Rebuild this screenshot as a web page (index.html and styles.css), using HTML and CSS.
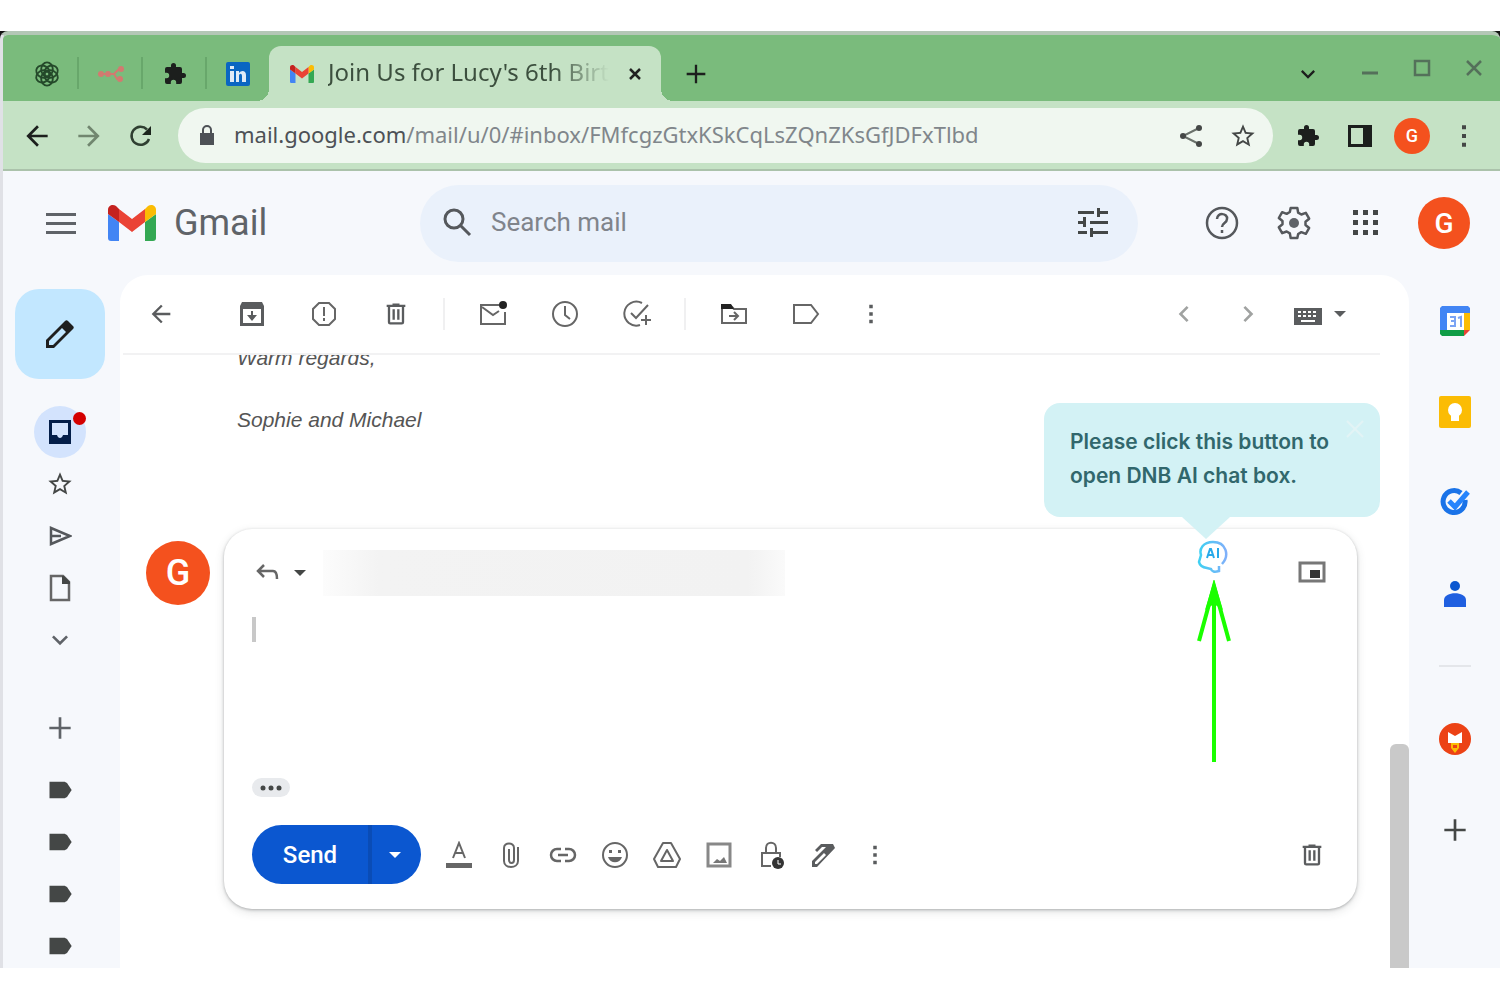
FILE: index.html
```html
<!DOCTYPE html>
<html lang="en">
<head>
    <meta charset="UTF-8">
    <meta name="viewport" content="width=device-width, initial-scale=1.0">
    <title>Gmail</title>
    <link rel="stylesheet" href="styles.css">
</head>
<body>
    <!-- shared icons -->
    <svg class="sprite" aria-hidden="true">
        <symbol id="gmail" viewBox="0 0 48 36">
            <path fill="#4285f4" d="M3 36h8V17L0 9v24c0 2 1 3 3 3z"/>
            <path fill="#34a853" d="M37 36h8c2 0 3-1 3-3V9l-11 8z"/>
            <path fill="#fbbc04" d="M37 4v13l11-8V5c0-5-5-6-8-4z"/>
            <path fill="#ea4335" d="M11 17V4l13 10L37 4v13L24 27z"/>
            <path fill="#c5221f" d="M0 5v4l11 8V4L8 1C5-1 0 0 0 5z"/>
        </symbol>
        <symbol id="puzzle" viewBox="0 0 24 24">
            <path d="M20.500 11H19V7a2 2 0 0 0-2-2h-4V3.500a2.500 2.500 0 0 0-5 0V5H4a2 2 0 0 0-2 2v3.800h1.500a2.700 2.700 0 0 1 0 5.400H2V20a2 2 0 0 0 2 2h3.800v-1.500a2.700 2.700 0 0 1 5.400 0V22H17a2 2 0 0 0 2-2v-4h1.500a2.500 2.500 0 0 0 0-5z"/>
        </symbol>
        <symbol id="star" viewBox="0 0 24 24">
            <path d="M22 9.240l-7.190-.620L12 2 9.190 8.630 2 9.240l5.460 4.730L5.820 21 12 17.270 18.180 21l-1.630-7.030L22 9.240zM12 15.400l-3.760 2.270 1-4.280-3.320-2.880 4.380-.380L12 6.100l1.710 4.040 4.380.380-3.320 2.880 1 4.280L12 15.400z"/>
        </symbol>
        <symbol id="back" viewBox="0 0 24 24">
            <path d="M20 11H7.830l5.590-5.590L12 4l-8 8 8 8 1.410-1.410L7.830 13H20v-2z"/>
        </symbol>
        <symbol id="caret" viewBox="0 0 24 24"><path d="M6 9l6 6 6-6z"/></symbol>
        <symbol id="chevron" viewBox="0 0 24 24"><path d="M7.400 8.600L12 13.200l4.600-4.600L18 10l-6 6-6-6z"/></symbol>
        <symbol id="more" viewBox="0 0 24 24">
            <path d="M10.500 4h3v3h-3zM10.500 10.500h3v3h-3zM10.500 17h3v3h-3z"/>
        </symbol>
        <symbol id="trash" viewBox="0 0 24 24">
            <path d="M15 4V3H9v1H4v2h1v13a2 2 0 0 0 2 2h10a2 2 0 0 0 2-2V6h1V4h-5zm2 15H7V6h10v13zM9 8h2v9H9zm4 0h2v9h-2z"/>
        </symbol>
        <symbol id="label" viewBox="0 0 24 24">
            <path d="M3 5h13l2 1 4 6-4 6-2 1H3z"/>
        </symbol>
        <symbol id="plus" viewBox="0 0 24 24"><path d="M11 4h2v7h7v2h-7v7h-2v-7H4v-2h7z"/></symbol>
    </svg>

    <div class="desktop">
    <div class="window">
        <div class="tabstrip">
            <div class="pinned">
                <svg class="i28 line" viewBox="0 0 24 24"><g stroke="#24492a" stroke-width="1.600"><ellipse cx="12" cy="8" rx="5" ry="6"/><ellipse cx="12" cy="8" rx="5" ry="6" transform="rotate(60 12 12)"/><ellipse cx="12" cy="8" rx="5" ry="6" transform="rotate(120 12 12)"/><ellipse cx="12" cy="8" rx="5" ry="6" transform="rotate(180 12 12)"/><ellipse cx="12" cy="8" rx="5" ry="6" transform="rotate(240 12 12)"/><ellipse cx="12" cy="8" rx="5" ry="6" transform="rotate(300 12 12)"/></g></svg>
            </div>
            <div class="pinned">
                <svg class="i28 line" viewBox="0 0 28 28"><path stroke="#d27a70" stroke-width="2" d="M1 14h16l5-5M17 14l3 5h3"/><g fill="#d27a70"><circle cx="4" cy="14" r="3"/><circle cx="11" cy="14" r="3"/><circle cx="24" cy="9" r="3"/><circle cx="23" cy="19" r="3"/></g></svg>
            </div>
            <div class="pinned"><svg class="i24 ink"><use href="#puzzle"/></svg></div>
            <div class="pinned">
                <svg class="i24" viewBox="0 0 24 24"><rect width="24" height="24" rx="2" fill="#0a66c2"/><path fill="#dfeaf7" d="M4 9h4v11H4zM4 4h4v3H4zM10 9h3v2c2-3 7-3 7 2v7h-4v-6c0-3-3-3-3 0v6h-3z"/></svg>
            </div>
            <div class="tab">
                <svg class="tab-icon"><use href="#gmail"/></svg>
                <span class="tab-title">Join Us for Lucy's 6th Birt</span>
                <button class="icon-btn tab-close" aria-label="Close tab"><svg class="i20 line" viewBox="0 0 20 20"><path stroke="#222" stroke-width="2.500" d="M5 5l10 10M15 5L5 15"/></svg></button>
            </div>
            <button class="icon-btn new-tab" aria-label="New tab"><svg class="i28 ink"><use href="#plus"/></svg></button>
            <div class="window-buttons">
                <button class="icon-btn chrome search-tabs" aria-label="Search tabs"><svg class="i28 ink"><use href="#chevron"/></svg></button>
                <button class="icon-btn chrome" aria-label="Minimize"><svg class="i20 line" viewBox="0 0 20 20"><path stroke="#54705a" stroke-width="3" d="M2 15h16"/></svg></button>
                <button class="icon-btn chrome" aria-label="Maximize"><svg class="i20 line" viewBox="0 0 20 20"><path stroke="#54705a" stroke-width="2.500" d="M3 3h14v14H3z"/></svg></button>
                <button class="icon-btn chrome" aria-label="Close"><svg class="i20 line" viewBox="0 0 20 20"><path stroke="#54705a" stroke-width="2.500" d="M3 3l14 14M17 3L3 17"/></svg></button>
            </div>
        </div>

        <div class="toolbar">
            <button class="icon-btn chrome" aria-label="Back"><svg class="i32 ink"><use href="#back"/></svg></button>
            <button class="icon-btn chrome" aria-label="Forward"><svg class="i32 faded flip"><use href="#back"/></svg></button>
            <button class="icon-btn chrome" aria-label="Reload"><svg class="i24 line" viewBox="0 0 24 24"><path stroke="#2f3f31" stroke-width="2.500" d="M20 15a9 9 0 1 1-2-9.500"/><path fill="#1c251d" d="M22 2v9h-9z"/></svg></button>
            <div class="omnibox">
                <svg class="lock" viewBox="0 0 16 22"><path fill="#4d5156" d="M1 8h14v12H1z"/><path fill="none" stroke="#4d5156" stroke-width="2" d="M4 8V5a4 4 0 0 1 8 0v3"/></svg>
                <div class="url"><b>mail.google.com</b>/mail/u/0/#inbox/FMfcgzGtxKSkCqLsZQnZKsGfJDFxTlbd</div>
                <button class="icon-btn chrome" aria-label="Share"><svg class="i24" viewBox="0 0 24 24"><path fill="none" stroke="#6a716b" stroke-width="2" d="M20 4L4 12l16 8"/><circle cx="20" cy="4" r="3"/><circle cx="4" cy="12" r="3"/><circle cx="20" cy="20" r="3"/></svg></button>
                <button class="icon-btn chrome" aria-label="Bookmark"><svg class="i28"><use href="#star"/></svg></button>
            </div>
            <button class="icon-btn chrome" aria-label="Extensions"><svg class="i24 ink"><use href="#puzzle"/></svg></button>
            <button class="icon-btn chrome" aria-label="Side panel"><svg class="i24 ink" viewBox="0 0 24 24"><path d="M0 1h24v22H0zM3 4v16h12V4z"/></svg></button>
            <button class="icon-btn chrome" aria-label="Profile"><span class="avatar avatar-s">G</span></button>
            <button class="icon-btn chrome" aria-label="Menu"><svg class="i32"><use href="#more"/></svg></button>
        </div>

        <header class="header">
            <button class="icon-btn menu" aria-label="Main menu"><svg class="i32 soft" viewBox="0 0 32 24"><path d="M1 2h30v3H1zM1 11h30v3H1zM1 20h30v3H1z"/></svg></button>
            <a class="brand" href="#"><svg class="brand-logo"><use href="#gmail"/></svg>Gmail</a>
            <div class="search">
                <svg class="i32 line" viewBox="0 0 32 32"><circle cx="13" cy="13" r="9" stroke="#55585c" stroke-width="3"/><path stroke="#55585c" stroke-width="3" d="M19 19l10 10"/></svg>
                <input type="text" placeholder="Search mail" aria-label="Search mail">
                <button class="icon-btn" aria-label="Search options"><svg class="i32" viewBox="0 0 32 32"><path d="M1 5h16v3H1zM20 2h3v3h8v3h-8v3h-3zM1 15h5v-4h3v10H6v-3H1zM13 15h18v3H13zM1 25h9v3H1zM13 22h3v3h15v3H16v3h-3z"/></svg></button>
            </div>
            <button class="icon-btn tool" aria-label="Support"><svg class="i36 line" viewBox="0 0 36 36"><g stroke="#55585c" stroke-width="2.500"><circle cx="18" cy="18" r="15"/><path d="M13 14c0-7 11-6 10 0 0 4-5 4-5 8M18 25v3"/></g></svg></button>
            <button class="icon-btn tool" aria-label="Settings"><svg class="i40 soft" viewBox="0 0 24 24"><path fill="none" stroke="#55585c" stroke-width="1.500" stroke-linejoin="round" d="M10 3h4l.5 2.800 1.900 1.100 2.700-1 2 3.500-2.200 1.800v2l2.200 1.800-2 3.500-2.700-1-1.900 1.100L14 21h-4l-.5-2.800-1.900-1.100-2.700 1-2-3.500 2.200-1.800v-2L2.900 9l2-3.500 2.700 1 1.900-1.100z"/><circle cx="12" cy="12" r="3"/></svg></button>
            <button class="icon-btn tool" aria-label="Google apps"><svg class="i28" viewBox="0 0 28 28"><path d="M1 1h5v5H1zM11 1h5v5h-5zM21 1h5v5h-5zM1 11h5v5H1zM11 11h5v5h-5zM21 11h5v5h-5zM1 21h5v5H1zM11 21h5v5h-5zM21 21h5v5h-5z"/></svg></button>
            <button class="icon-btn account" aria-label="Account"><span class="avatar avatar-m">G</span></button>
        </header>

        <div class="body">
            <nav class="rail">
                <button class="icon-btn compose" aria-label="Compose"><svg class="i36" viewBox="0 0 36 36"><path fill="#1f1f1f" d="M4 32v-8L23 5c1-1 2-1 3 0l5 5c1 1 1 2 0 3L12 32zM7 29h4l13-13-4-4L7 25z" fill-rule="evenodd"/></svg></button>
                <a class="rail-item" href="#" aria-label="Inbox"><span class="inbox"><svg class="i24" viewBox="0 0 24 24"><path fill="#041e49" fill-rule="evenodd" d="M1 0h22v24H1zM4 3v12h5c1 4 5 4 6 0h5V3z"/></svg><span class="dot"></span></span></a>
                <a class="rail-item" href="#" aria-label="Starred"><svg class="i28"><use href="#star"/></svg></a>
                <a class="rail-item" href="#" aria-label="Sent"><svg class="i24 line" viewBox="0 0 24 24"><path stroke="#55585c" stroke-width="2.500" d="M3 4l19 8-19 8zM3 12h10"/></svg></a>
                <a class="rail-item" href="#" aria-label="Drafts"><svg class="i28 line" viewBox="0 0 28 28"><path stroke="#666" stroke-width="2.500" d="M5 2h12l6 6v18H5z"/><path fill="#444746" d="M16 2h2l6 6v2h-8z"/></svg></a>
                <a class="rail-item" href="#" aria-label="More"><svg class="i32 soft"><use href="#chevron"/></svg></a>
                <a class="rail-item create" href="#" aria-label="Create label"><svg class="i32 soft"><use href="#plus"/></svg></a>
                <a class="rail-item" href="#" aria-label="Label 1"><svg class="i28"><use href="#label"/></svg></a>
                <a class="rail-item" href="#" aria-label="Label 2"><svg class="i28"><use href="#label"/></svg></a>
                <a class="rail-item" href="#" aria-label="Label 3"><svg class="i28"><use href="#label"/></svg></a>
                <a class="rail-item" href="#" aria-label="Label 4"><svg class="i28"><use href="#label"/></svg></a>
            </nav>

            <main class="panel">
                <div class="actions">
                    <button class="icon-btn tool first" aria-label="Back to inbox"><svg class="i28"><use href="#back"/></svg></button>
                    <button class="icon-btn tool" aria-label="Archive"><svg class="i28" viewBox="0 0 28 28"><path fill-rule="evenodd" d="M4 2h20l2 4v20H2V6zM5 9v14h18V9zM13 11h2v4h4l-5 6-5-6h4z"/></svg></button>
                    <button class="icon-btn tool" aria-label="Report spam"><svg class="i28 line" viewBox="0 0 28 28"><path stroke="#666" stroke-width="2" d="M9 3h10l6 6v10l-6 6H9l-6-6V9zM14 7v9M14 18v3"/></svg></button>
                    <button class="icon-btn tool" aria-label="Delete"><svg class="i28"><use href="#trash"/></svg></button>
                    <span class="divider"></span>
                    <button class="icon-btn tool" aria-label="Mark as unread"><svg class="i28 line" viewBox="0 0 28 28"><path stroke="#666" stroke-width="2" d="M20 5H2v19h24V12M3 7l11 8 6-4"/><circle cx="24" cy="5" r="4" fill="#222"/></svg></button>
                    <button class="icon-btn tool" aria-label="Snooze"><svg class="i28 line" viewBox="0 0 28 28"><g stroke="#666" stroke-width="2"><circle cx="14" cy="14" r="12"/><path d="M14 6v9l5 4"/></g></svg></button>
                    <button class="icon-btn tool" aria-label="Add to tasks"><svg class="i28 line" viewBox="0 0 28 28"><path stroke="#666" stroke-width="2" d="M19 3A12 12 0 1 0 17 25M8 13l5 5L25 5M23 15v10M18 20h10"/></svg></button>
                    <span class="divider"></span>
                    <button class="icon-btn tool" aria-label="Move to"><svg class="i28 line" viewBox="0 0 28 28"><path stroke="#666" stroke-width="2" d="M2 6h9l3 3h12v14H2zM9 16h9M14 12l4 4-4 4"/><path fill="#222" d="M1 4h10l3 5H1z"/></svg></button>
                    <button class="icon-btn tool" aria-label="Labels"><svg class="i28 line" viewBox="0 0 28 28"><path stroke="#666" stroke-width="2" d="M2 5h17l7 9-7 9H2z"/></svg></button>
                    <button class="icon-btn tool narrow" aria-label="More"><svg class="i28"><use href="#more"/></svg></button>
                    <span class="spacer"></span>
                    <button class="icon-btn pager" aria-label="Newer"><svg class="i32 pale left"><use href="#chevron"/></svg></button>
                    <button class="icon-btn pager" aria-label="Older"><svg class="i32 pale right"><use href="#chevron"/></svg></button>
                    <button class="icon-btn keyboard" aria-label="Input tools"><svg class="i28" viewBox="0 0 28 28"><path fill-rule="evenodd" d="M0 8h28v17H0zM4 11v2h3v-2zm5 0v2h3v-2zm5 0v2h3v-2zm5 0v2h3v-2zM4 15v2h3v-2zm5 0v2h3v-2zm5 0v2h3v-2zm5 0v2h3v-2zM7 20v2h14v-2z"/></svg><svg class="i24"><use href="#caret"/></svg></button>
                </div>

                <div class="scroll">
                    <div class="thread">
                        <div class="message">
                            <p>Warm regards,</p>
                            <p>Sophie and Michael</p>
                        </div>
                        <div class="reply">
                            <span class="avatar avatar-l">G</span>
                            <div class="card">
                                <div class="recipient">
                                    <button class="icon-btn" aria-label="Type of response"><svg class="i28 line" viewBox="0 0 28 28"><path stroke="#666" stroke-width="2.500" d="M12 6l-6 6 6 6M6 12h15q4 0 4 8"/></svg><svg class="i24"><use href="#caret"/></svg></button>
                                    <span class="redacted"></span>
                                    <button class="icon-btn pop-out" aria-label="Pop out reply"><svg class="i28 line" viewBox="0 0 28 28"><path stroke="#777" stroke-width="3" d="M2 4h24v18H2z"/><path fill="#333" d="M12 11h10v8H12z"/></svg></button>
                                </div>
                                <div class="editor">
                                    <span class="cursor"></span>
                                    <textarea aria-label="Message body"></textarea>
                                </div>
                                <button class="icon-btn trimmed" aria-label="Show trimmed content"><svg viewBox="0 0 24 6"><circle cx="4" cy="3" r="2.500"/><circle cx="12" cy="3" r="2.500"/><circle cx="20" cy="3" r="2.500"/></svg></button>
                                <div class="format">
                                    <div class="send-group">
                                        <button class="send">Send</button>
                                        <button class="send-more" aria-label="More send options"><svg class="i24"><use href="#caret"/></svg></button>
                                    </div>
                                    <button class="icon-btn fmt" aria-label="Formatting options"><svg class="i28 line" viewBox="0 0 28 28"><path stroke="#666" stroke-width="2" d="M8 17l6-15 6 15M10 12h8"/><path fill="#666" d="M1 22h26v5H1z"/></svg></button>
                                    <button class="icon-btn fmt" aria-label="Attach files"><svg class="i28 line" viewBox="0 0 28 28"><path stroke="#666" stroke-width="2" d="M21 6v14c0 8-14 8-14 0V7c0-6 10-6 10 0v12c0 4-5 4-5 0V8"/></svg></button>
                                    <button class="icon-btn fmt" aria-label="Insert link"><svg class="i28 line" viewBox="0 0 28 28"><path stroke="#666" stroke-width="2.500" d="M12 8H8a6 6 0 0 0 0 12h4M16 8h4a6 6 0 0 1 0 12h-4M9 14h10"/></svg></button>
                                    <button class="icon-btn fmt" aria-label="Insert emoji"><svg class="i28 line" viewBox="0 0 28 28"><circle cx="14" cy="14" r="12" stroke="#666" stroke-width="2"/><path fill="#666" d="M8 9h3v3H8zM17 9h3v3h-3zM7 16h14c-2 7-12 7-14 0z"/></svg></button>
                                    <button class="icon-btn fmt" aria-label="Insert from Drive"><svg class="i28 line" viewBox="0 0 28 28"><g stroke="#666" stroke-width="2" stroke-linejoin="round"><path d="M10 2h8l9 16-4 8H5l-4-8z"/><path d="M14 9l6 11H8z"/></g></svg></button>
                                    <button class="icon-btn fmt" aria-label="Insert photo"><svg class="i28 line" viewBox="0 0 28 28"><path stroke="#888" stroke-width="3" d="M3 3h22v22H3z"/><path fill="#777" d="M8 22l4-4 3 2 4-4 3 6z"/></svg></button>
                                    <button class="icon-btn fmt" aria-label="Confidential mode"><svg class="i28 line" viewBox="0 0 28 28"><path stroke="#666" stroke-width="2" d="M14 25H5V12h18v4M9 12V7c0-7 10-7 10 0v5"/><circle cx="21" cy="22" r="6" fill="#333"/><path stroke="#fff" d="M21 19v4h3"/></svg></button>
                                    <button class="icon-btn fmt" aria-label="Insert signature"><svg class="i28" viewBox="0 0 28 28"><path d="M3 26v-6L17 6h-4l-5 5-2-2 6-6h12l2 4L8 26zM6 21v2h2l9-9-2-2z" fill-rule="evenodd"/></svg></button>
                                    <button class="icon-btn fmt" aria-label="More options"><svg class="i28"><use href="#more"/></svg></button>
                                    <span class="spacer"></span>
                                    <button class="icon-btn discard" aria-label="Discard draft"><svg class="i28"><use href="#trash"/></svg></button>
                                </div>

                                <!-- AI helper button and its hint -->
                                <div class="hint">
                                    <p>Please click this button to open DNB AI chat box.</p>
                                    <button class="icon-btn hint-close" aria-label="Close hint"><svg class="i20 line" viewBox="0 0 20 20"><path stroke="#e2f4f5" stroke-width="2" d="M2 2l16 16M18 2L2 18"/></svg></button>
                                </div>
                                <button class="icon-btn ai" aria-label="Open AI chat"><svg viewBox="0 0 32 34"><defs><linearGradient id="ai-stroke"><stop offset="0" stop-color="#3fd0f2"/><stop offset="1" stop-color="#7fb0fa"/></linearGradient></defs><path fill="none" stroke="url(#ai-stroke)" stroke-width="2.500" d="M25 24c8-9 4-22-9-22C6 2 2 9 4 15l-2 7q1 5 8 6l4 1q1 4 8 2v-5"/><path fill="none" stroke="#27a9ea" stroke-width="2" d="M10 18l3-9h1l3 9M11 15h5M21 8v10"/></svg></button>
                                <svg class="pointer" viewBox="0 0 36 182"><path fill="none" stroke="#1aff00" stroke-width="4" d="M18 6v176M3 61L18 6l15 55"/><path fill="#1aff00" d="M18 0l9 30-9-6-9 6z"/></svg>
                            </div>
                        </div>
                    </div>
                    <div class="scrollbar"><div class="thumb"></div></div>
                </div>
            </main>

            <aside class="addons">
                <a href="#" aria-label="Calendar"><svg class="i32" viewBox="0 0 32 32"><path fill="#fff" d="M6 6h20v20H6z"/><path fill="#4285f4" d="M1 3l2-2h26l2 2v5H8v18H1z"/><path fill="#fbbc04" d="M25 8h6v17h-6z"/><path fill="#0f9d46" d="M1 25h24v6H3l-2-2z"/><path fill="#ea4335" d="M25 25h6l-6 6z"/><path fill="none" stroke="#7ba4f4" stroke-width="2" d="M11 12h5v9h-5M12 16h4M19 13l3-1v10"/></svg></a>
                <a href="#" aria-label="Keep"><svg class="i32" viewBox="0 0 32 32"><rect width="32" height="32" rx="2" fill="#fbbc04"/><circle cx="16" cy="14" r="7" fill="#fff"/><path fill="#fff" d="M12 19h8v6h-8z"/></svg></a>
                <a href="#" aria-label="Tasks"><svg class="i32" viewBox="0 0 32 32"><path fill="none" stroke="#1a73e8" stroke-width="5" d="M22 6A11 11 0 1 0 26 13"/><path fill="none" stroke="#2684fc" stroke-width="5" d="M10 14l6 6L29 5"/></svg></a>
                <a href="#" aria-label="Contacts"><svg class="i28" viewBox="0 0 28 28"><circle cx="14" cy="6" r="5" fill="#0b57d0"/><path fill="#1f5fe0" d="M3 20c0-9 22-9 22 0v7H3z"/></svg></a>
                <span class="rule"></span>
                <a href="#" aria-label="Mail add-on"><svg class="i32" viewBox="0 0 32 32"><circle cx="16" cy="16" r="16" fill="#ec4215"/><path fill="#fff" d="M9 9l7 4 7-4v11H9z"/><path fill="#fbbc04" d="M12 20h8v5l-4 5-4-5z"/><path fill="#ec4215" d="M14 22h4v3h-4z"/></svg></a>
                <a href="#" aria-label="Get add-ons"><svg class="i32"><use href="#plus"/></svg></a>
            </aside>
        </div>
    </div>
    </div>
</body>
</html>
```
FILE: styles.css
```css
* {
    margin: 0;
    padding: 0;
    box-sizing: border-box;
}

body {
    display: flex;
    flex-direction: column;
    height: 100vh;
    padding: 31px 0 32px;
    background: #fff;
    font-family: Roboto, 'Liberation Sans', sans-serif;
    color: #444746;
}

svg {
    display: block;
    flex: none;
    fill: #444746;
}

.sprite {
    position: absolute;
    width: 0;
    height: 0;
}

.i20 { width: 20px; height: 20px; }
.i24 { width: 24px; height: 24px; }
.i28 { width: 28px; height: 28px; }
.i32 { width: 32px; height: 32px; }
.i36 { width: 36px; height: 36px; }
.i40 { width: 40px; height: 40px; }

.line { fill: none; }
.ink { fill: #1c1f1d; }
.soft { fill: #5f6368; }
.faded { fill: #71866f; }
.pale { fill: #a0a2a1; }
.flip { transform: scaleX(-1); }
.left { transform: rotate(90deg); }
.right { transform: rotate(-90deg); }

.icon-btn {
    display: flex;
    align-items: center;
    justify-content: center;
    flex: none;
    border: none;
    background: none;
    cursor: pointer;
}

.spacer {
    flex: 1;
}

.avatar {
    display: flex;
    align-items: center;
    justify-content: center;
    flex: none;
    border-radius: 50%;
    background: #f4511e;
    color: #fff;
    font-family: Roboto, sans-serif;
    font-weight: 500;
}

.avatar-s { width: 36px; height: 36px; font-size: 18px; }
.avatar-m { width: 52px; height: 52px; font-size: 28px; }
.avatar-l { width: 64px; height: 64px; font-size: 36px; }

.desktop {
    display: flex;
    flex: 1;
    min-height: 0;
    background: #111;
}

.window {
    display: flex;
    flex-direction: column;
    flex: 1;
    min-width: 0;
    border-top: 4px solid #b4c7b6;
    border-left: 3px solid #e0e1e6;
    border-radius: 8px 8px 0 0;
    background: #f6f8fc;
    overflow: hidden;
}

/* browser chrome */
.tabstrip {
    display: flex;
    flex: none;
    height: 66px;
    padding: 11px 0 0 12px;
    background: #7abb7c;
}

.pinned {
    display: flex;
    align-items: center;
    justify-content: center;
    flex: none;
    width: 64px;
    background: linear-gradient(#68a76b, #68a76b) right 11px / 2px 32px no-repeat;
}

.pinned:nth-child(4) {
    width: 62px;
    background: none;
}

.tab {
    position: relative;
    display: flex;
    align-items: center;
    flex: none;
    width: 392px;
    padding: 0 12px 0 21px;
    border-radius: 12px 12px 0 0;
    background: #c5e2c5;
}

.tab::before,
.tab::after {
    content: '';
    position: absolute;
    bottom: 0;
    width: 12px;
    height: 12px;
}

.tab::before {
    right: 100%;
    background: radial-gradient(circle at 0 0, transparent 12px, #c5e2c5 12px);
}

.tab::after {
    left: 100%;
    background: radial-gradient(circle at 100% 0, transparent 12px, #c5e2c5 12px);
}

.tab-icon {
    width: 24px;
    height: 18px;
    margin-right: 14px;
}

.tab-title {
    flex: 1;
    padding-bottom: 4px;
    overflow: hidden;
    white-space: nowrap;
    font-family: 'Noto Sans', sans-serif;
    font-size: 24px;
    line-height: 32px;
    color: #3c4f3e;
    -webkit-mask-image: linear-gradient(to right, #000 80%, transparent);
    mask-image: linear-gradient(to right, #000 80%, transparent);
}

.tab-close {
    width: 28px;
    margin-left: 12px;
}

.new-tab {
    width: 70px;
}

.window-buttons {
    display: flex;
    margin-left: auto;
}

.chrome {
    width: 52px;
}

.window-buttons .chrome {
    padding-bottom: 12px;
}

.window-buttons .search-tabs {
    margin-right: 10px;
    padding-bottom: 0;
}

.toolbar {
    display: flex;
    flex: none;
    height: 70px;
    padding: 7px 10px 6px 8px;
    border-bottom: 2px solid #abc2ab;
    background: #c5e2c5;
}

.omnibox {
    display: flex;
    align-items: center;
    flex: 1;
    min-width: 0;
    margin: 0 9px 0 11px;
    padding: 0 4px 0 21px;
    border-radius: 28px;
    background: #f0f7f0;
}

.lock {
    width: 16px;
    height: 22px;
}

.url {
    flex: 1;
    min-width: 0;
    margin-left: 19px;
    padding-bottom: 4px;
    overflow: hidden;
    white-space: nowrap;
    font-family: 'Noto Sans', sans-serif;
    font-size: 22px;
    line-height: 32px;
    color: #80868b;
}

.url b {
    font-weight: 400;
    color: #4d5156;
}

/* gmail header */
.header {
    display: flex;
    align-items: center;
    flex: none;
    height: 104px;
    padding: 0 30px 0 32px;
}

.menu {
    width: 52px;
}

.brand {
    display: flex;
    align-items: center;
    width: 333px;
    padding-left: 21px;
    font-size: 36px;
    color: #5f6368;
    text-decoration: none;
}

.brand-logo {
    width: 48px;
    height: 36px;
    margin-right: 18px;
}

.search {
    display: flex;
    align-items: center;
    flex: 1;
    min-width: 0;
    height: 77px;
    margin-right: 48px;
    padding: 0 29px 2px 21px;
    border-radius: 39px;
    background: #eaf1fb;
}

.search input {
    flex: 1;
    min-width: 0;
    margin-left: 18px;
    border: none;
    outline: none;
    background: none;
    font-family: Roboto, sans-serif;
    font-size: 26px;
    color: #444746;
}

.search input::placeholder {
    color: #80848b;
}

.tool {
    width: 72px;
}

.account {
    margin-left: 16px;
}

.body {
    display: flex;
    flex: 1;
    min-height: 0;
}

/* left rail */
.rail {
    display: flex;
    flex-direction: column;
    flex: none;
    align-items: center;
    width: 117px;
    padding: 14px 3px 0 0;
    overflow: hidden;
}

.compose {
    width: 90px;
    height: 90px;
    margin-bottom: 27px;
    border-radius: 24px;
    background: #c2e7ff;
}

.rail-item {
    display: flex;
    align-items: center;
    justify-content: center;
    flex: none;
    width: 52px;
    height: 52px;
}

.create {
    margin: 36px 0 10px;
}

.inbox {
    position: relative;
    display: flex;
    align-items: center;
    justify-content: center;
    width: 52px;
    height: 52px;
    border-radius: 50%;
    background: #d3e3fd;
}

.dot {
    position: absolute;
    top: 6px;
    right: 0;
    width: 13px;
    height: 13px;
    border-radius: 50%;
    background: #d40000;
}

/* conversation */
.panel {
    display: flex;
    flex-direction: column;
    flex: 1;
    min-width: 0;
    border-radius: 28px 28px 0 0;
    background: #fff;
    overflow: hidden;
}

.actions {
    display: flex;
    flex: none;
    height: 80px;
    margin: 0 29px 0 3px;
    padding: 0 28px 0 2px;
    border-bottom: 2px solid #f2f2f3;
}

.first {
    margin-right: 19px;
}

.narrow {
    width: 58px;
}

.divider {
    flex: none;
    width: 2px;
    height: 32px;
    margin: 23px 12px 0 11px;
    background: #f0f0f1;
}

.pager {
    width: 64px;
}

.keyboard {
    gap: 6px;
    margin-left: 14px;
}

.scroll {
    display: flex;
    flex: 1;
    min-height: 0;
    overflow: hidden;
}

.thread {
    flex: 1;
    min-width: 0;
    padding: 0 33px 0 26px;
}

.message {
    margin-top: -10px;
    padding-left: 91px;
    font-family: 'Liberation Sans', Arial, sans-serif;
    font-size: 21px;
    font-style: italic;
    line-height: 26px;
    color: #555;
}

.message p {
    margin-bottom: 36px;
}

.reply {
    display: flex;
    align-items: flex-start;
    gap: 14px;
    padding-top: 60px;
}

.reply .avatar {
    margin-top: 12px;
}

.card {
    position: relative;
    flex: 1;
    min-width: 0;
    padding: 21px 28px 25px;
    border-radius: 28px;
    background: #fff;
    box-shadow: 0 1px 3px rgba(60, 64, 67, 0.35), 0 3px 10px rgba(60, 64, 67, 0.15);
}

.recipient {
    display: flex;
    align-items: center;
    height: 46px;
}

.recipient .icon-btn {
    gap: 8px;
}

.redacted {
    width: 462px;
    height: 46px;
    margin-left: 11px;
    background: linear-gradient(to right, #fcfcfc, #f3f3f3 12%, #f2f2f2 92%, #fafafa);
}

.recipient .pop-out {
    width: 34px;
    margin-left: auto;
}

.editor {
    display: flex;
    height: 161px;
    margin-top: 21px;
}

.cursor {
    width: 4px;
    height: 25px;
    background: #c8c8c8;
}

.editor textarea {
    flex: 1;
    border: none;
    outline: none;
    background: none;
    resize: none;
    font: 21px/26px 'Liberation Sans', sans-serif;
}

.trimmed {
    width: 38px;
    height: 19px;
    border-radius: 10px;
    background: #e8eaed;
}

.trimmed svg {
    width: 24px;
    height: 6px;
}

.format {
    display: flex;
    height: 59px;
    margin-top: 28px;
}

.send-group {
    display: flex;
    flex: none;
    margin-right: 12px;
    border-radius: 30px;
    background: #0b57d0;
    overflow: hidden;
}

.send,
.send-more {
    display: flex;
    align-items: center;
    justify-content: center;
    border: none;
    background: none;
    color: #fff;
    cursor: pointer;
}

.send {
    width: 116px;
    font-family: Roboto, sans-serif;
    font-size: 24px;
    font-weight: 500;
}

.send-more {
    width: 53px;
    padding-right: 4px;
    border-left: 4px solid #0a4cb6;
}

.send-more svg {
    fill: #fff;
}

.fmt {
    width: 52px;
}

.discard {
    width: 34px;
}

.actions svg:not(.line):not(.pale),
.fmt svg:not(.line),
.discard svg {
    fill: #5a5c5e;
}

.hint {
    position: absolute;
    right: -23px;
    bottom: 392px;
    width: 336px;
    padding: 22px 26px 24px;
    border-radius: 16px;
    background: #d3f2f5;
    font-family: Inter, sans-serif;
    font-size: 21px;
    font-weight: 600;
    line-height: 34px;
    color: #31676c;
}

.hint p {
    width: 272px;
}

.hint::after {
    content: '';
    position: absolute;
    top: 100%;
    left: 138px;
    border: 24px solid transparent;
    border-top: 22px solid #d3f2f5;
    border-bottom: none;
}

.hint-close {
    position: absolute;
    top: 16px;
    right: 15px;
}

.ai {
    position: absolute;
    top: 11px;
    right: 128px;
}

.ai svg {
    width: 32px;
    height: 34px;
}

.pointer {
    position: absolute;
    top: 51px;
    right: 125px;
    width: 36px;
    height: 182px;
}

.scrollbar {
    flex: none;
    width: 19px;
    padding-top: 389px;
}

.thumb {
    height: 100%;
    border-radius: 6px 6px 0 0;
    background: #c9c9c9;
}

/* right side panel */
.addons {
    display: flex;
    flex-direction: column;
    align-items: center;
    flex: none;
    width: 91px;
}

.addons a {
    display: flex;
    align-items: center;
    justify-content: center;
    flex: none;
    height: 91px;
}

.addons .rule {
    flex: none;
    width: 32px;
    height: 2px;
    margin: 26px 0;
    background: #e4e6ea;
}
```
